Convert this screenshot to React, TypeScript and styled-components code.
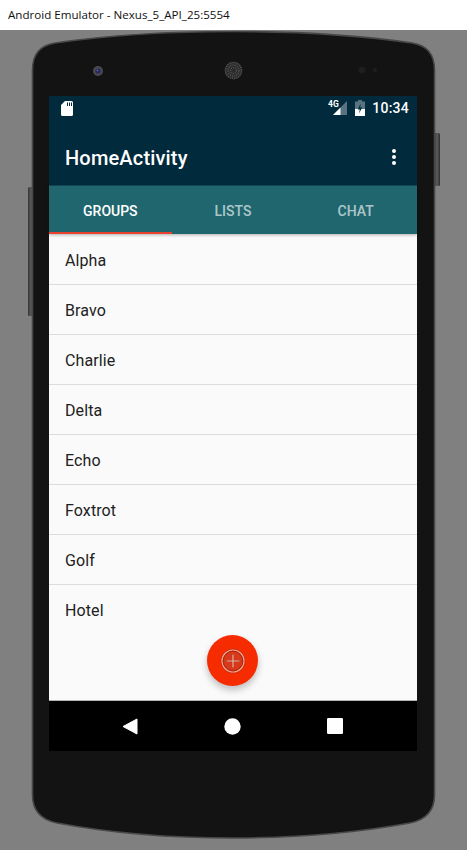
import React from "react";
import styled, { createGlobalStyle } from "styled-components";

const Global = createGlobalStyle`
  html, body { margin: 0; padding: 0; background: #808080; }
  #root { width: 467px; height: 850px; overflow: hidden; }
`;

const Page = styled.div`
  width: 467px;
  height: 850px;
  display: flex;
  flex-direction: column;
  background: #808080;
`;

const WindowBar = styled.header`
  height: 30px;
  flex: none;
  background: #fff;
  color: #111;
  font: 400 11.6px/30px "Open Sans", sans-serif;
  padding-left: 8px;
`;

const Stage = styled.main`
  position: relative;
  flex: 1;
  padding: 66px 50px 0 49px;
`;

const DeviceArt = styled.svg`
  position: absolute;
  left: 0;
  top: 0;
`;

const Screen = styled.section`
  position: relative;
  width: 368px;
  height: 655px;
  display: flex;
  flex-direction: column;
  background: #fafafa;
  font-family: Roboto, sans-serif;
`;

const StatusBar = styled.div`
  height: 24px;
  flex: none;
  display: flex;
  align-items: center;
  padding: 0 8px 0 12px;
  background: #012a3c;
  color: #fff;
`;

const StatusRight = styled.div`
  margin-left: auto;
  display: flex;
  align-items: center;
`;

const Clock = styled.span`
  font: 500 14px/24px Roboto, sans-serif;
  margin-left: 7px;
  letter-spacing: 0.25px;
`;

const AppBar = styled.div`
  height: 66px;
  flex: none;
  display: flex;
  align-items: center;
  padding: 11px 21px 0 16px;
  background: #012a3c;
  box-sizing: border-box;
  border-bottom: 1px solid #14495a;
`;

const Title = styled.h1`
  margin: 0;
  color: #fff;
  font: 500 20px/24px Roboto, sans-serif;
  letter-spacing: 0.17px;
`;

const Overflow = styled.div`
  margin-left: auto;
  margin-bottom: 2px;
  display: flex;
  flex-direction: column;
  gap: 1.5px;
`;

const Dot = styled.span`
  width: 4.5px;
  height: 4.5px;
  border-radius: 50%;
  background: #fff;
`;

const Tabs = styled.nav`
  position: relative;
  z-index: 1;
  height: 48px;
  flex: none;
  display: grid;
  grid-template-columns: repeat(3, 1fr);
  background: #20666e;
  box-shadow: 0 1px 3px rgba(0, 0, 0, 0.3);
`;

const Tab = styled.div<{ $active?: boolean }>`
  box-sizing: border-box;
  display: flex;
  align-items: center;
  justify-content: center;
  padding-top: 3px;
  font: 500 14px/20px Roboto, sans-serif;
  color: ${(p) => (p.$active ? "#fff" : "rgba(255,255,255,0.65)")};
  border-bottom: 2px solid ${(p) => (p.$active ? "#e8412f" : "transparent")};
`;

const List = styled.ul`
  flex: 1;
  margin: 0;
  padding: 1px 0 0;
  list-style: none;
  background: #fafafa;
`;

const Row = styled.li`
  box-sizing: border-box;
  height: 50px;
  padding: 2px 0 0 16px;
  display: flex;
  align-items: center;
  color: #212121;
  font: 400 16px/20px Roboto, sans-serif;
  letter-spacing: 0.1px;
  border-bottom: 1px solid #dcdcdc;
  &:last-child { border-bottom: none; }
`;

const Fab = styled.button`
  position: absolute;
  left: 158px;
  top: 539px;
  width: 51px;
  height: 51px;
  padding: 0;
  border: none;
  border-radius: 50%;
  background: #f62c00;
  display: flex;
  align-items: center;
  justify-content: center;
  box-shadow: 0 4px 7px rgba(0, 0, 0, 0.24);
`;

const NavBar = styled.div`
  height: 50px;
  flex: none;
  display: grid;
  grid-template-columns: repeat(3, 1fr);
  align-items: center;
  justify-items: center;
  padding: 0 31px 0 30px;
  background: #000;
  border-top: 1px solid #b5b5b5;
  box-sizing: content-box;
`;

const items = ["Alpha", "Bravo", "Charlie", "Delta", "Echo", "Foxtrot", "Golf", "Hotel"];

export default function App() {
  return (
    <Page>
      <Global />
      <WindowBar>Android Emulator - Nexus_5_API_25:5554</WindowBar>
      <Stage>
        <DeviceArt width="467" height="820" viewBox="0 30 467 820">
          <defs>
            <linearGradient id="side" x1="0" x2="1" y1="0" y2="0">
              <stop offset="0" stopColor="#333" />
              <stop offset="0.5" stopColor="#5e5e5e" />
              <stop offset="1" stopColor="#2c2c2c" />
            </linearGradient>
          </defs>
          <rect x="28" y="187" width="6" height="129" rx="1.5" fill="url(#side)" />
          <rect x="434" y="133" width="6" height="53" rx="1.5" fill="url(#side)" />
          <path
            d="M32.5 70 C32.5 52 42 45 55 43 C110 35 170 31.5 233 31.5 C297 31.5 357 35 412 43 C425 45 434.5 52 434.5 70 L434.5 795 C434.5 812 425 820 410 823 C355 833 295 838 233 838 C172 838 110 833 57 823 C42 820 32.5 812 32.5 795 Z"
            fill="#131313"
            stroke="#484848"
            strokeWidth="1.6"
          />
          <circle cx="98" cy="71" r="5" fill="#4a4a4e" />
          <circle cx="98" cy="71" r="2.6" fill="#26285e" />
          <circle cx="97.4" cy="70.4" r="0.8" fill="#6a70b0" />
          <circle cx="233.5" cy="70.5" r="9" fill="#2c2c2c" />
          <circle cx="233.5" cy="70.5" r="8" fill="none" stroke="#555" strokeWidth="1.3" strokeDasharray="1.1 1.1" />
          <circle cx="233.5" cy="70.5" r="5.5" fill="none" stroke="#555" strokeWidth="1.3" strokeDasharray="1.1 1.1" />
          <circle cx="233.5" cy="70.5" r="3" fill="none" stroke="#555" strokeWidth="1.2" strokeDasharray="1.1 1.1" />
          <circle cx="362" cy="70" r="3.5" fill="#1e1e1e" />
          <circle cx="375" cy="70" r="2" fill="#202020" />
        </DeviceArt>
        <Screen>
          <StatusBar>
            <svg width="12" height="15" viewBox="0 0 12 15">
              <path fill="#fff" fillRule="evenodd" d="M4 0H10.5A1.5 1.5 0 0 1 12 1.5V13.5A1.5 1.5 0 0 1 10.5 15H1.5A1.5 1.5 0 0 1 0 13.5V4ZM6 1.5V5H7V1.5ZM8 1.5V5H9V1.5ZM10 1.5V5H11V1.5Z" />
            </svg>
            <StatusRight>
              <svg width="19" height="16" viewBox="0 0 19 16">
                <path fill="rgba(255,255,255,0.35)" d="M19 1V15H5Z" />
                <path fill="#fff" d="M12.5 7.5V15H5Z" />
                <text x="0" y="7" fill="#fff" fontFamily="Roboto, sans-serif" fontWeight="700" fontSize="8.5">4G</text>
              </svg>
              <svg width="10" height="16" viewBox="0 0 10 16" style={{ marginLeft: 8 }}>
                <path fill="rgba(255,255,255,0.35)" d="M3 0H7V1.5H10V16H0V1.5H3Z" />
                <path fill="#fff" d="M0 9H10V16H0Z" />
                <path fill="#012a3c" d="M5.6 3.5 2.8 9.5H4.8L4 13.5 7.2 7.5H5.2Z" />
              </svg>
              <Clock>10:34</Clock>
            </StatusRight>
          </StatusBar>
          <AppBar>
            <Title>HomeActivity</Title>
            <Overflow>
              <Dot />
              <Dot />
              <Dot />
            </Overflow>
          </AppBar>
          <Tabs>
            <Tab $active>GROUPS</Tab>
            <Tab>LISTS</Tab>
            <Tab>CHAT</Tab>
          </Tabs>
          <List>
            {items.map((item) => (
              <Row key={item}>{item}</Row>
            ))}
          </List>
          <NavBar>
            <svg width="16" height="17" viewBox="0 0 16 17">
              <path fill="#fff" stroke="#fff" strokeWidth="1" strokeLinejoin="round" d="M15 1V16L1 8.5Z" />
            </svg>
            <svg width="17" height="17" viewBox="0 0 17 17">
              <circle cx="8.5" cy="8.5" r="8.2" fill="#fff" />
            </svg>
            <svg width="16" height="16" viewBox="0 0 16 16">
              <rect width="16" height="16" rx="1.2" fill="#fff" />
            </svg>
          </NavBar>
          <Fab aria-label="Add">
            <svg width="26" height="26" viewBox="0 0 26 26" fill="none">
              <circle cx="13" cy="13" r="12" stroke="#a83018" strokeWidth="0.8" />
              <circle cx="13" cy="13" r="11" stroke="#f2a594" strokeWidth="1.2" />
              <circle cx="13" cy="13" r="9.8" fill="#d9381a" stroke="#8f2a14" strokeWidth="0.8" />
              <path d="M13 6V20M6 13H20" stroke="#a83018" strokeWidth="2.2" />
              <path d="M13 6.5V19.5M6.5 13H19.5" stroke="#f6b5a6" strokeWidth="1.2" />
            </svg>
          </Fab>
        </Screen>
      </Stage>
    </Page>
  );
}
